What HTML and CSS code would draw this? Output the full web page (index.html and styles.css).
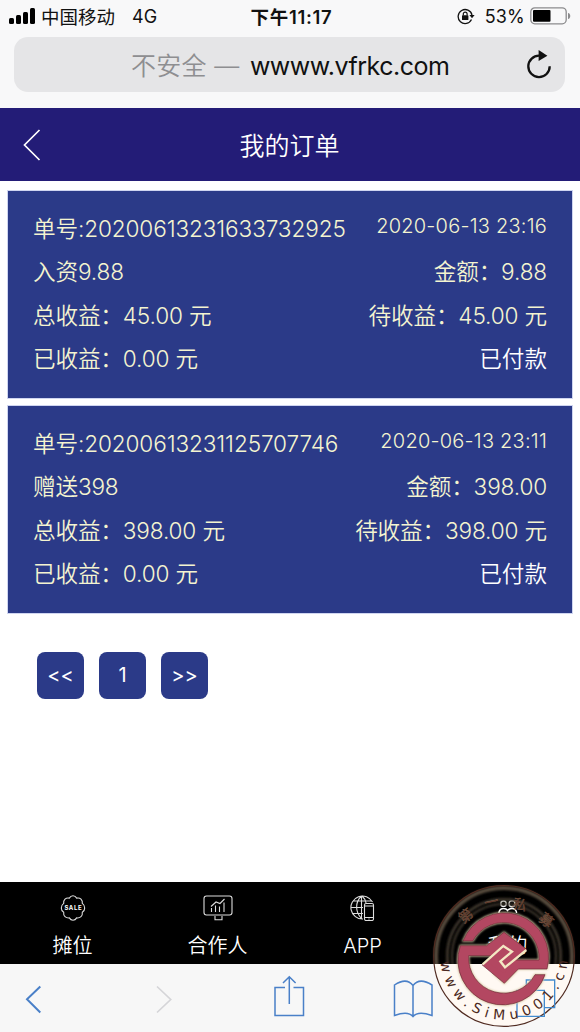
FILE: index.html
```html
<!DOCTYPE html>
<html lang="zh-CN">
<head>
    <meta charset="UTF-8">
    <meta name="viewport" content="width=device-width, initial-scale=1.0">
    <title>我的订单</title>
    <link rel="stylesheet" href="styles.css">
</head>
<body>
    <div class="browser-top">
        <div class="status-bar">
            <div class="carrier">
                <svg class="signal" width="26" height="16" viewBox="0 0 26 16">
                    <rect x="0" y="10" width="5" height="6" rx="1.5"/>
                    <rect x="7" y="7" width="5" height="9" rx="1.5"/>
                    <rect x="14" y="4" width="5" height="12" rx="1.5"/>
                    <rect x="21" y="0" width="5" height="16" rx="1.5"/>
                </svg>
                <span class="carrier-name">中国移动</span>
                <span class="network">4G</span>
            </div>
            <div class="time">下午11:17</div>
            <div class="power">
                <svg width="18" height="17" viewBox="0 0 18 17">
                    <path d="M14.5 11.5A7 7 0 1 1 15 7" fill="none" stroke="#111" stroke-width="1.3"/>
                    <path d="M12.4 7h5.2L15 10.2z" fill="#111"/>
                    <rect x="5" y="7.3" width="6.4" height="4.7" rx=".6" fill="#111"/>
                    <path d="M6.3 7.5V6a1.9 1.9 0 0 1 3.8 0v1.5" fill="none" stroke="#111" stroke-width="1.2"/>
                </svg>
                <span class="percent">53%</span>
                <svg class="battery" width="41" height="18" viewBox="0 0 41 18">
                    <rect x=".8" y=".8" width="35.4" height="16" rx="4" fill="none" stroke="#8b8b8d" stroke-width="1.3"/>
                    <rect x="3" y="3" width="17.5" height="11.8" rx="1" fill="#000"/>
                    <path d="M38 6c3 0 3 6 0 6z" fill="#8b8b8d"/>
                </svg>
            </div>
        </div>
        <div class="address-bar">
            <div class="address"><span class="insecure">不安全 — </span><span class="url">wwww.vfrkc.com</span></div>
            <svg class="reload" width="26" height="30" viewBox="0 0 26 30">
                <path d="M13.5 5.7A10.7 10.7 0 1 0 23.7 16.3" fill="none" stroke="#111" stroke-width="2.3"/>
                <path d="M12.6 0v11l8.8-5.3z" fill="#111"/>
            </svg>
        </div>
    </div>

    <header>
        <svg class="back" width="18" height="32" viewBox="0 0 18 32">
            <path d="M16.5 1L1.5 16l15 15" fill="none" stroke="#fff" stroke-width="1.7"/>
        </svg>
        <h1>我的订单</h1>
    </header>

    <main>
        <ul class="orders">
            <li class="order">
                <div class="row"><span class="number">单号:20200613231633732925</span><span class="date">2020-06-13 23:16</span></div>
                <div class="row"><span>入资9.88</span><span>金额：9.88</span></div>
                <div class="row"><span>总收益：45.00 元</span><span>待收益：45.00 元</span></div>
                <div class="row"><span>已收益：0.00 元</span><span class="state">已付款</span></div>
            </li>
            <li class="order">
                <div class="row"><span class="number">单号:20200613231125707746</span><span class="date">2020-06-13 23:11</span></div>
                <div class="row"><span>赠送398</span><span>金额：398.00</span></div>
                <div class="row"><span>总收益：398.00 元</span><span>待收益：398.00 元</span></div>
                <div class="row"><span>已收益：0.00 元</span><span class="state">已付款</span></div>
            </li>
        </ul>
        <div class="pages">
            <a href="#">&lt;&lt;</a>
            <a href="#">1</a>
            <a href="#">&gt;&gt;</a>
        </div>
    </main>

    <nav class="tabs">
        <a href="#">
            <svg width="26" height="26" viewBox="0 0 26 26">
                <path d="M13 .8q2.3 0 3.7 2.3 2.6-.6 4.3 1t1.3 4.3q2.4 1.8 2.4 4.6t-2.4 4.3q.4 2.7-1.3 4.3t-4.3 1.3Q15.3 25.2 13 25.2t-3.7-2.3q-2.6.3-4.3-1.3t-1.3-4.3Q1.3 15.800 1.3 13t2.4-4.600q-.4-2.700 1.300-4.300t4.300-1Q10.700.8 13 .8z"/>
                <text x="13.3" y="15.3" class="sale">SALE</text>
            </svg>
            <span>摊位</span>
        </a>
        <a href="#">
            <svg width="30" height="26" viewBox="0 0 30 26">
                <rect x="1" y="1" width="28" height="19" rx="2.5"/>
                <path d="M12 21v3.7h7V21M8.5 13v4M12.5 10.5V17M16.5 11.5V17M21 7.5V17M8 11.5l5-4.5 4 1.5L21.5 4"/>
            </svg>
            <span>合作人</span>
        </a>
        <a href="#">
            <svg width="26" height="26" viewBox="0 0 26 26">
                <path d="M13 24A11.5 11.5 0 1 1 22.5 7M11.5 1v22.5M11.5 1C5 7 5 17 11.5 23.5M12 1q3.5 3 4 7M3 6h19M1 12.5h12M3 18.5h10"/>
                <rect x="14.5" y="8.5" width="9" height="17" rx="1.5"/>
                <path d="M14.5 11h9M14.5 22.5h9M18.5 24h1"/>
            </svg>
            <span>APP</span>
        </a>
        <a href="#">
            <svg class="me" width="26" height="26" viewBox="0 0 26 26">
                <circle cx="8.5" cy="8.7" r="2.7"/>
                <circle cx="17" cy="8.7" r="3"/>
                <path d="M4 18v-1q1-3.500 4.500-3.500 3 0 4 2 1.500-2 4.500-2 3.500 0 4.500 3.500v1"/>
            </svg>
            <span>我的</span>
        </a>
    </nav>

    <div class="toolbar">
        <svg width="580" height="68" viewBox="0 964 580 68">
            <path d="M40.3 986.5L27 999.3l13.3 13.2" stroke-width="2"/>
            <path class="off" d="M157 986.5l13.7 13-13.7 13" stroke-width="1.7"/>
            <path d="M285 987.5h-10V1015.5h28.5V987.5h-10M289.3 1004V977M283 983l6.3-6.3 6.3 6.3"/>
            <path d="M413 1016.5q-5-6-18.5-1V985q12-8 18.5.5 6.5-8.500 19-.5v30.500q-14-5-19 1zM413 985.500v31"/>
        </svg>
    </div>

    <!-- round seal over the lower right corner -->
    <svg class="seal" width="155" height="157" viewBox="0 0 465 471">
        <defs>
            <clipPath id="upper"><rect x="0" y="0" width="465" height="267"/></clipPath>
            <clipPath id="lower"><rect x="0" y="267" width="465" height="204"/></clipPath>
            <filter id="glow" x="-20%" y="-20%" width="140%" height="140%"><feGaussianBlur stdDeviation="3"/></filter>
            <path id="address-arc" d="M46 243A191 191 0 0 0 428 243"/>
        </defs>
        <circle cx="237" cy="243" r="209" fill="#fff9f3" clip-path="url(#lower)"/>
        <g class="halo" clip-path="url(#upper)">
            <circle cx="237" cy="243" r="204" stroke="#574b3e" stroke-width="12" filter="url(#glow)"/>
            <circle cx="237" cy="243" r="170" stroke="#40382e" stroke-width="8" filter="url(#glow)"/>
            <circle cx="237" cy="243" r="156" stroke="#40382e" stroke-width="6" filter="url(#glow)"/>
        </g>
        <circle cx="237" cy="243" r="211" fill="none" stroke="#512b20" stroke-width="3.5"/>
        <g clip-path="url(#lower)" fill="none" stroke="#438bce" stroke-width="4">
            <path d="M304 345v-30h85v83h-30M276 346h82v78h-82z"/>
        </g>
        <g class="seal-name">
            <text transform="translate(120 120) rotate(-38)">第</text>
            <text transform="translate(198 78) rotate(-12)">一</text>
            <text transform="translate(285 86) rotate(14)">私</text>
            <text transform="translate(365 133) rotate(40)">募</text>
        </g>
        <g class="emblem-glow" filter="url(#glow)">
            <path d="M114 198A133 133 0 0 1 366 282H280L238 325 205 296 265 255H342A106 106 0 0 0 143 198z"/>
            <path d="M106 212H185L237 172 274 200 200 242H131A106 106 0 0 0 330 299H360A133 133 0 0 1 106 212z"/>
        </g>
        <g class="emblem">
            <path d="M114 198A133 133 0 0 1 366 282H280L238 325 172 270 210 240 265 255H342A106 106 0 0 0 143 198z"/>
            <path d="M106 212H185L237 172 305 223 265 255 210 242H131A106 106 0 0 0 330 299H360A133 133 0 0 1 106 212z"/>
            <path class="fill" d="M200 240L237 205 275 255 238 295 190 265z"/>
            <path class="key" d="M173 268L235 213 261 230 226 259 240 277 304 225"/>
        </g>
        <text class="seal-address"><textPath href="#address-arc" startOffset="18" textLength="568">www.SiMu001.cn</textPath></text>
    </svg>
</body>
</html>
```
FILE: styles.css
```css
* {
    box-sizing: border-box;
}
body {
    font-family: Inter, "Noto Sans CJK SC", sans-serif;
    margin: 0;
    height: 1032px;
    display: flex;
    flex-direction: column;
    background-color: #fff;
    position: relative;
    overflow: hidden;
}
a {
    color: inherit;
    text-decoration: none;
}

/* Browser bars */
.browser-top {
    height: 108px;
    background-color: #f8f8f9;
    color: #111;
}
.status-bar {
    display: grid;
    grid-template-columns: 1fr auto 1fr;
    align-items: center;
    height: 32px;
    padding: 0 9px;
    font-size: 18px;
}
.carrier, .power {
    display: flex;
    align-items: center;
}
.carrier-name {
    margin-left: 6px;
    font-size: 18.5px;
}
.network {
    margin-left: 17px;
}
.time {
    margin-left: 3px;
    padding-bottom: 1px;
    font-size: 18.5px;
    font-weight: 600;
    letter-spacing: 0.7px;
}
.power {
    justify-content: flex-end;
}
.percent {
    margin: 0 5px 0 10px;
    letter-spacing: 0.2px;
}
.address-bar {
    display: flex;
    align-items: center;
    height: 55px;
    margin: 5px 15px 0 14px;
    padding-right: 13px;
    border-radius: 14px;
    background-color: #e5e5e7;
    font-size: 25px;
}
.address {
    flex: 1;
    padding: 0 0 2px 117px;
    white-space: pre;
}
.insecure {
    margin-right: 3px;
    color: #8e8e91;
    font-weight: 350;
    letter-spacing: 0.3px;
}
.url {
    letter-spacing: -0.5px;
}

header {
    display: flex;
    align-items: center;
    height: 73px;
    padding-left: 23px;
    background-color: #231c77;
    color: #fff;
}
h1 {
    flex: 1;
    margin: 0 42px 0 0;
    padding-bottom: 2px;
    font-size: 25px;
    font-weight: 350;
    text-align: center;
}

/* Orders */
main {
    flex: 1;
}
.orders {
    list-style-type: none;
    margin: 0;
    padding: 8.5px 7px 0;
    display: flex;
    flex-direction: column;
    gap: 6px;
}
.order {
    height: 209px;
    padding: 16.5px 25px;
    border: 1px solid #cfd5f0;
    background-color: #2b3a88;
    color: #f4f4d0;
    font-size: 22.6px;
    font-weight: 350;
    letter-spacing: -0.15px;
}
.row {
    display: flex;
    justify-content: space-between;
    height: 43.3px;
    line-height: 43.3px;
    white-space: nowrap;
}
.number {
    letter-spacing: -0.12px;
}
.date {
    font-size: 20px;
    line-height: 39px;
    letter-spacing: 0.22px;
}
.state {
    color: #fff;
    letter-spacing: 0;
}
.pages {
    display: flex;
    gap: 15px;
    padding: 38px 37px;
}
.pages a {
    width: 47px;
    height: 47px;
    border-radius: 8px;
    background-color: #2b3a88;
    color: #fff;
    font-size: 20px;
    line-height: 47px;
    text-align: center;
}

/* Bottom tabs */
.tabs {
    display: flex;
    height: 82px;
    background-color: #000;
    color: #fff;
}
.tabs a {
    flex: 1;
    display: flex;
    flex-direction: column;
    align-items: center;
    padding-top: 13px;
    font-size: 20px;
    font-weight: 350;
    line-height: 31px;
}
.tabs svg {
    margin-bottom: 10px;
    fill: none;
    stroke: #ddd;
    stroke-width: 1.1;
}
.tabs .me {
    stroke: #fff;
    stroke-width: 1.4;
}
.tabs .sale {
    fill: #fff;
    stroke: none;
    font-size: 6px;
    font-weight: 700;
    letter-spacing: 0.6px;
    text-anchor: middle;
}
.toolbar {
    height: 68px;
    background-color: #f7f7f7;
}
.toolbar svg {
    display: block;
    fill: none;
    stroke: #4a80c8;
    stroke-width: 1.5;
}
.toolbar .off {
    stroke: #d5d5d8;
}

/* Seal */
.seal {
    position: absolute;
    left: 425px;
    top: 875px;
}
.halo {
    fill: none;
}
.seal-name {
    fill: #5a2b22;
    stroke: #80664f;
    stroke-width: 1;
    font-family: "Noto Sans CJK SC", sans-serif;
    font-size: 42px;
    text-anchor: middle;
    dominant-baseline: central;
}
.emblem-glow {
    fill: #d8c9a4;
    stroke: #d8c9a4;
    stroke-width: 5;
}
.emblem {
    fill: #b34761;
    stroke: #6b2835;
    stroke-width: 2;
}
.emblem .fill {
    stroke: none;
}
.emblem .key {
    fill: none;
    stroke: #f4e8c4;
    stroke-width: 7;
}
.seal-address {
    fill: #4c2a22;
    font-family: "DejaVu Sans", sans-serif;
    font-size: 42px;
}
```
